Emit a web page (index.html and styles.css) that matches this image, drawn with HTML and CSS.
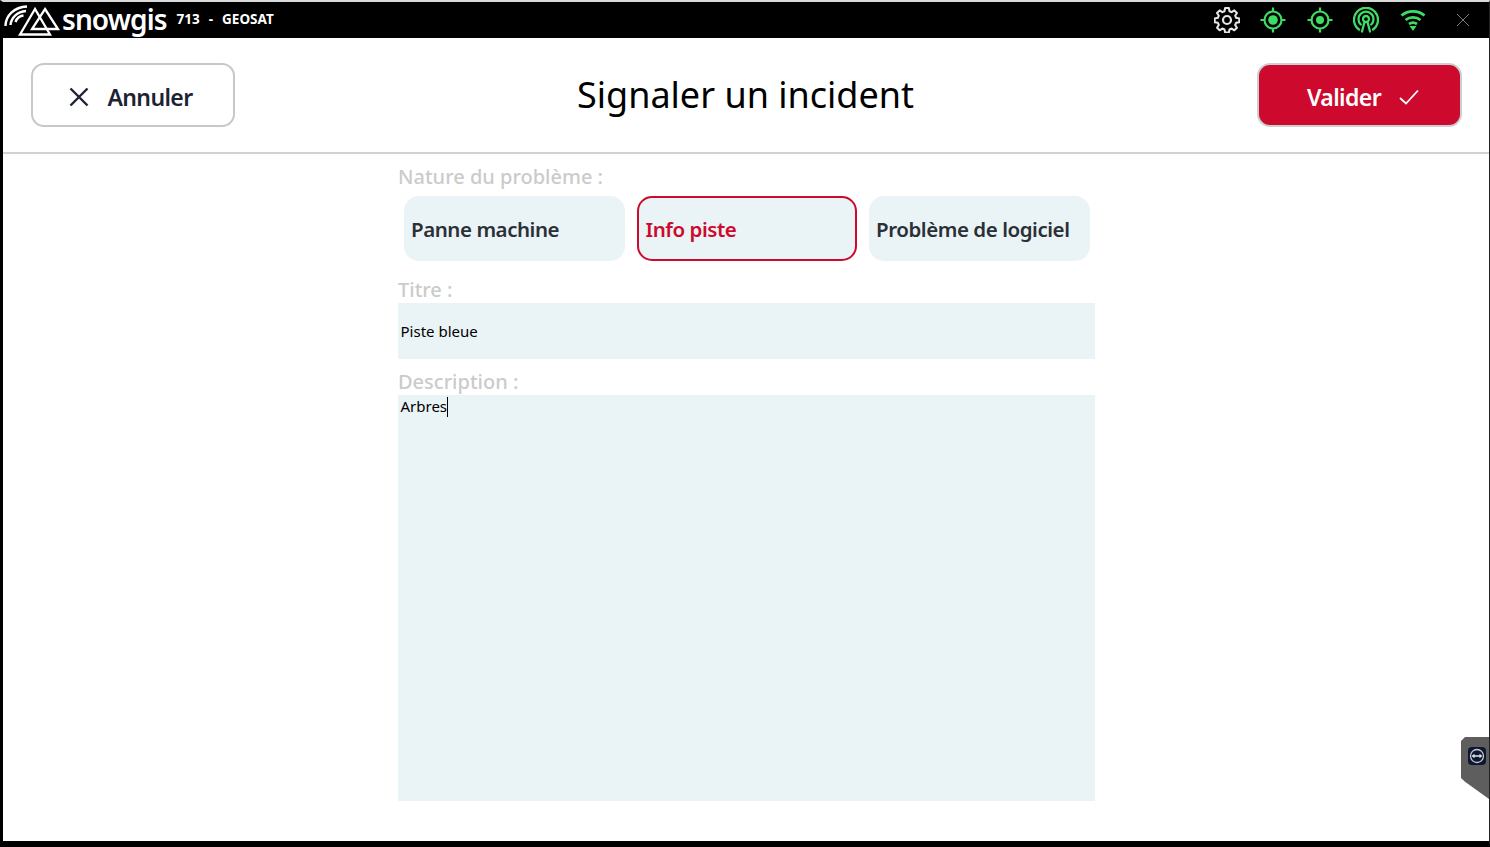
FILE: index.html
```html
<!DOCTYPE html>
<html lang="fr">
<head>
<meta charset="utf-8">
<title>Signaler un incident</title>
<link rel="stylesheet" href="styles.css">
</head>
<body>
<div class="window">
  <div class="topbar">
    <div class="brand">
      <svg class="logo" viewBox="0 0 58 36" width="58" height="36" fill="none" stroke="#fff">
        <path d="M2.500 24C2.500 14 11 5 24 4.500" stroke-width="2.400"/>
        <path d="M7.500 23C8 16 14 9.500 23 9" stroke-width="2.400"/>
        <path d="M12.500 20C13.500 17 16 14 20.500 13.500" stroke-width="2.400"/>
        <path d="M32 7L17 32.500H47Z" stroke-width="2.300"/>
        <path d="M42 7L55 27H29Z" stroke-width="2.300"/>
      </svg>
      <span class="wordmark">snowgis</span>
      <span class="unit">713</span>
      <span class="dash">-</span>
      <span class="company">GEOSAT</span>
    </div>
    <div class="status">
      <svg class="ico gear" viewBox="0 0 26 26" width="26" height="26" fill="none" stroke="#e6e6e6" stroke-width="2.200" stroke-linejoin="round">
        <circle cx="13" cy="13" r="4"/>
        <path d="M11 1.800h4l.7 3.400 2.300 1 2.900-1.900 2.800 2.800-1.900 2.900 1 2.300 3.400.7v4l-3.400.7-1 2.300 1.900 2.900-2.800 2.800-2.900-1.900-2.300 1-.7 3.400h-4l-.7-3.400-2.300-1-2.900 1.900-2.800-2.800 1.900-2.900-1-2.300-3.400-.7v-4l3.400-.7 1-2.300-1.900-2.900 2.800-2.800 2.900 1.900 2.300-1z" transform="translate(.9 -.6) scale(.93)"/>
      </svg>
      <svg class="ico" viewBox="0 0 26 26" width="26" height="26" fill="none" stroke="#3fdc64" stroke-width="2.200">
        <circle cx="13" cy="13" r="8.500"/><circle cx="13" cy="13" r="4.800" fill="#3fdc64" stroke="none"/>
        <path d="M13 0.500v4M13 21.500v4M0.500 13h4M21.500 13h4"/>
      </svg>
      <svg class="ico" viewBox="0 0 26 26" width="26" height="26" fill="none" stroke="#3fdc64" stroke-width="2.200">
        <circle cx="13" cy="13" r="8.500"/><circle cx="13" cy="13" r="4" fill="#3fdc64" stroke="none"/>
        <path d="M13 0.500v4M13 21.500v4M0.500 13h4M21.500 13h4"/>
      </svg>
      <svg class="ico" viewBox="0 0 26 26" width="26" height="26" fill="none" stroke="#3fdc64" stroke-width="2.300" stroke-linecap="round">
        <path d="M6 22.500A12 12 0 1 1 20 22.500"/>
        <path d="M7.800 17.500A7.500 7.500 0 1 1 18.200 17.500"/>
        <circle cx="13" cy="12" r="3"/>
        <path d="M11.500 15L9 24.500M14.500 15L17 24.500"/>
      </svg>
      <svg class="ico" viewBox="0 0 26 26" width="26" height="26" fill="none" stroke="#3fdc64" stroke-width="2.800">
        <path d="M1.500 8.500C8 3 18 3 24.500 8.500"/>
        <path d="M5.500 13C10 9.500 16 9.500 20.500 13"/>
        <path d="M9 17C11.500 15.300 14.500 15.300 17 17"/>
        <path d="M9.500 19h7L13 24z" fill="#3fdc64" stroke="none"/>
      </svg>
      <svg class="close" viewBox="0 0 14 14" width="14" height="14" fill="none" stroke="#7a7a7a" stroke-width="1">
        <path d="M1 1L13 13M13 1L1 13"/>
      </svg>
    </div>
  </div>

  <header class="head">
    <button class="btn cancel" type="button">
      <svg class="btn-icon" viewBox="0 0 20 20" width="20" height="20" fill="none" stroke="#1d2333" stroke-width="2.400">
        <path d="M1.500 1.500L18.500 18.500M18.500 1.500L1.500 18.500"/>
      </svg>
      <span class="btn-text">Annuler</span>
    </button>
    <h1 class="title">Signaler un incident</h1>
    <button class="btn confirm" type="button">
      <span class="btn-text">Valider</span>
      <svg class="btn-icon" viewBox="0 0 20 16" width="20" height="16" fill="none" stroke="#fff" stroke-width="1.800">
        <path d="M1 9L7 14.500L19 1.500"/>
      </svg>
    </button>
  </header>

  <main class="form">
    <div class="label first">Nature du problème :</div>
    <div class="choices">
      <div class="choice">Panne machine</div>
      <div class="choice selected">Info piste</div>
      <div class="choice">Problème de logiciel</div>
    </div>
    <div class="label title-label">Titre :</div>
    <div class="input">Piste bleue</div>
    <div class="label desc-label">Description :</div>
    <div class="textarea">Arbres<span class="caret"></span></div>
  </main>

  <div class="tv-tab">
    <svg viewBox="0 0 18 18" width="18" height="18" fill="none">
      <rect width="18" height="18" rx="4" fill="#0e1630"/>
      <circle cx="9" cy="9" r="6.500" stroke="#c4c8d2" stroke-width="1.300"/>
      <path d="M3.500 9l3-2.300v1.500h5V6.700l3 2.300-3 2.300V9.800h-5v1.500z" fill="#dfe3ea"/>
    </svg>
  </div>
</div>
</body>
</html>
```
FILE: styles.css
```css
* { box-sizing: border-box; }
html, body { margin: 0; height: 100%; overflow: hidden; background: #000; }
body { font-family: "Noto Sans", "Open Sans", sans-serif; color: #000; }

.window {
  position: relative;
  width: 1490px;
  height: 847px;
  background: #fff;
  display: flex;
  flex-direction: column;
  border-left: 3px solid #000;
  border-right: 1px solid #222;
  border-bottom: 6px solid #000;
  border-top: 2px solid #d9d9d9;
}

.topbar {
  flex: none;
  height: 36px;
  background: #000;
  display: flex;
  justify-content: space-between;
  align-items: center;
  color: #fff;
}
.brand { display: flex; align-items: center; height: 36px; }
.logo { display: block; }
.wordmark { font-size: 28px; font-weight: 600; line-height: 36px; margin-left: 1px; margin-top: -3px; letter-spacing: -0.9px; }
.unit, .dash, .company { font-size: 13.500px; font-weight: 700; line-height: 36px; margin-top: -2px; }
.unit { margin-left: 10px; }
.dash { margin-left: 9px; }
.company { margin-left: 9px; }
.status { display: flex; align-items: center; gap: 20.500px; padding-right: 19px; }
.ico { display: block; flex: none; }
.close { display: block; flex: none; margin-left: 10px; }

.head {
  flex: none;
  height: 116px;
  display: flex;
  align-items: center;
  justify-content: space-between;
  padding: 0 27px 0 28px;
  border-bottom: 2px solid #d2d2d2;
}
.btn {
  width: 204px;
  height: 64px;
  border-radius: 13px;
  font-family: inherit;
  font-size: 23px;
  font-weight: 600;
  letter-spacing: -0.6px;
  display: flex;
  align-items: center;
  justify-content: center;
  padding: 0;
  margin-top: -1px;
}
.btn-text { position: relative; top: 2px; }
.btn-icon { position: relative; top: 2px; flex: none; }
.cancel { background: #fff; border: 2px solid #c8c8c8; color: #1d2333; gap: 18px; padding-right: 4px; }
.confirm { width: 205px; background: #cd0a2d; border: 2px solid #c9d0d4; color: #fff; gap: 18px; padding-left: 7px; }
.title { margin: 0 0 0 -1px; font-size: 36px; font-weight: 400; line-height: 52px; }

.form {
  width: 697px;
  margin-left: 395px;
  display: flex;
  flex-direction: column;
}
.label { color: #cbcbcb; font-size: 20px; font-weight: 500; line-height: 24px; }
.first { margin-top: 11px; }
.choices { display: flex; gap: 12px; padding: 7px 4px 0 6px; }
.choice {
  flex: none;
  width: 220.500px;
  height: 65px;
  border-radius: 15px;
  background: #eaf3f6;
  color: #2b3036;
  font-size: 20.500px;
  font-weight: 600;
  letter-spacing: -0.45px;
  display: flex;
  align-items: center;
  padding: 0 0 0 7px;
}
.selected { border: 2px solid #cd0a2d; color: #cd0a2d; }
.title-label { margin-top: 17px; }
.desc-label { margin-top: 11px; }
.input {
  height: 56px;
  margin-top: 1px;
  background: #eaf3f6;
  display: flex;
  align-items: center;
  padding-left: 2.500px;
  font-size: 15px;
}
.textarea {
  height: 406px;
  margin-top: 1px;
  background: #eaf3f6;
  padding-left: 2.500px;
  font-size: 15px;
  line-height: 23px;
}
.caret { display: inline-block; width: 1px; height: 20px; background: #000; vertical-align: -5px; }

.tv-tab {
  position: absolute;
  right: 0;
  top: 735px;
  width: 28px;
  height: 62px;
  background: #5e5e5e;
  clip-path: polygon(4px 0, 100% 0, 100% 100%, 4px 72%, 0 66%, 0 4px);
  padding: 10px 0 0 7px;
}
.tv-tab svg { display: block; }
```
